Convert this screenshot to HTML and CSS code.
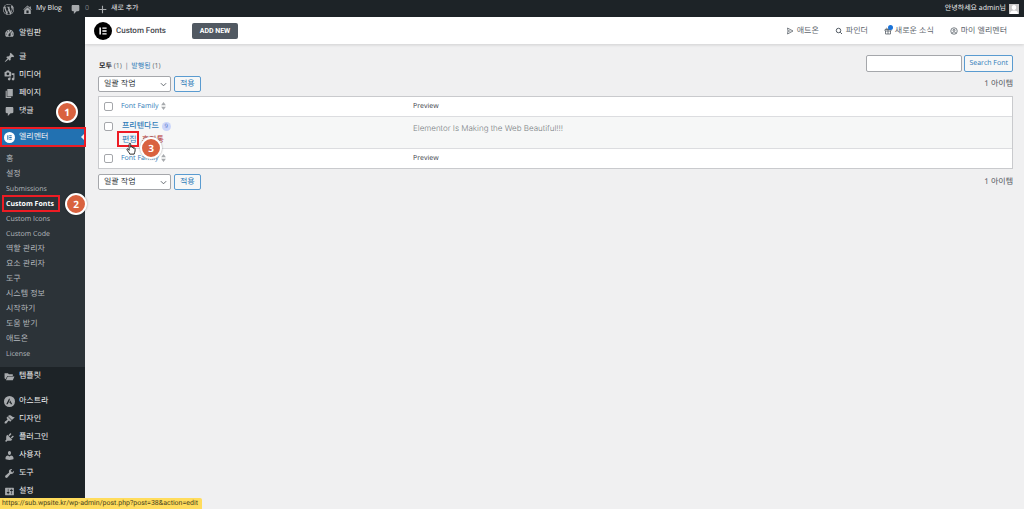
FILE: index.html
```html
<!DOCTYPE html>
<html lang="ko">
<head>
<meta charset="utf-8">
<title>Custom Fonts</title>
<link rel="stylesheet" href="styles.css">
</head>
<body>
<header class="adminbar">
  <a class="bar-link" href="#" aria-label="WordPress"><svg class="icon" viewBox="0 0 20 20"><path d="M20 10c0-5.51-4.49-10-10-10C4.48 0 0 4.49 0 10c0 5.52 4.48 10 10 10 5.51 0 10-4.48 10-10zM7.78 15.37L4.37 6.22c.55-.02 1.17-.08 1.17-.08.5-.06.44-1.13-.06-1.11 0 0-1.45.11-2.37.11-.18 0-.37 0-.58-.01C4.12 2.69 6.87 1.11 10 1.11c2.33 0 4.45.87 6.05 2.34-.68-.11-1.65.39-1.65 1.58 0 .74.45 1.36.9 2.1.35.61.55 1.36.55 2.46 0 1.49-1.4 5-1.4 5l-3.03-8.37c.54-.02.82-.17.82-.17.5-.05.44-1.25-.06-1.22 0 0-1.44.12-2.38.12-.87 0-2.33-.12-2.33-.12-.5-.03-.56 1.2-.06 1.22l.92.08 1.26 3.41zM17.41 10c.24-.64.74-1.87.43-4.25.7 1.29 1.05 2.71 1.05 4.25 0 3.29-1.73 6.24-4.4 7.78.97-2.59 1.94-5.2 2.92-7.78zM6.1 18.09C3.12 16.65 1.11 13.53 1.11 10c0-1.3.23-2.48.72-3.59C3.25 10.3 4.67 14.2 6.1 18.09zm4.03-6.63l2.58 6.98c-.86.29-1.76.45-2.71.45-.79 0-1.57-.11-2.29-.33.81-2.38 1.62-4.74 2.42-7.1z"/></svg></a>
  <a class="bar-link" href="#"><svg class="icon" viewBox="0 0 20 20"><path d="M16 8.5l1.53 1.53-1.06 1.06L10 4.6l-6.47 6.49-1.06-1.06L10 2.5l4 4v-2h2v4zm-6-2.46l6 5.99V18H4v-5.97zM12 17v-5H8v5h4z"/></svg><span>My Blog</span></a>
  <a class="bar-link muted" href="#"><svg class="icon" viewBox="0 0 20 20"><path d="M5 2h10c1.1 0 2 .9 2 2v7c0 1.1-.9 2-2 2h-3l-5 5v-5H5c-1.1 0-2-.9-2-2V4c0-1.1.9-2 2-2z"/></svg><span>0</span></a>
  <a class="bar-link" href="#"><svg class="icon" viewBox="0 0 20 20"><path d="M17 9v2h-6v6H9v-6H3V9h6V3h2v6h6z"/></svg><span>새로 추가</span></a>
  <a class="bar-link account" href="#"><span>안녕하세요 admin님</span><svg class="avatar" viewBox="0 0 20 20"><path class="avatar-bg" d="M0 0h20v20H0z"/><path class="avatar-fg" d="M10 2c3 0 4.500 2.200 4.500 5S12.500 12 10 12 5.500 10 5.500 7 7 2 10 2zM2 20c0-5 3-7 8-7s8 2 8 7z"/></svg></a>
</header>
<div class="layout">
<nav class="sidebar" aria-label="관리자 메뉴">
  <ul class="menu">
    <li><a class="menu-link" href="#"><svg class="icon" viewBox="0 0 20 20"><path d="M3.760 16h12.480c1.100-1.370 1.760-3.110 1.760-5 0-4.420-3.580-8-8-8s-8 3.580-8 8c0 1.890.66 3.630 1.760 5zM10 4c.55 0 1 .45 1 1s-.45 1-1 1-1-.45-1-1 .45-1 1-1zM6 6c.55 0 1 .45 1 1s-.45 1-1 1-1-.45-1-1 .45-1 1-1zm8 0c.55 0 1 .45 1 1s-.45 1-1 1-1-.45-1-1 .45-1 1-1zm-5.370 5.550L12 7v6c0 1.100-.9 2-2 2s-2-.9-2-2c0-.57.24-1.080.63-1.450zM4 10c.55 0 1 .45 1 1s-.45 1-1 1-1-.45-1-1 .45-1 1-1zm12 0c.55 0 1 .45 1 1s-.45 1-1 1-1-.45-1-1 .45-1 1-1z"/></svg>알림판</a></li>
  </ul>
  <ul class="menu">
    <li><a class="menu-link" href="#"><svg class="icon" viewBox="0 0 20 20"><path d="M10.440 3.020l1.820-1.820 6.360 6.350-1.830 1.820c-1.050-.68-2.480-.57-3.410.36l-.75.75c-.92.93-1.040 2.350-.35 3.410l-1.830 1.820-2.410-2.410-2.800 2.790c-.42.42-3.380 2.710-3.800 2.290s1.860-3.390 2.280-3.810l2.790-2.790L4.100 9.360l1.830-1.820c1.050.69 2.480.57 3.400-.36l.75-.75c.93-.92 1.050-2.350.36-3.410z"/></svg>글</a></li>
    <li><a class="menu-link" href="#"><svg class="icon" viewBox="0 0 20 20"><path d="M13 11V4c0-.55-.45-1-1-1h-1.670L9 1H5L3.670 3H2c-.55 0-1 .45-1 1v7c0 .55.45 1 1 1h10c.55 0 1-.45 1-1zM7 4.500c1.380 0 2.500 1.120 2.500 2.500S8.380 9.500 7 9.500 4.500 8.380 4.500 7 5.620 4.500 7 4.500zM14 6h5v10.500c0 1.380-1.120 2.500-2.500 2.500S14 17.880 14 16.500s1.120-2.500 2.500-2.500c.17 0 .34.02.5.05V9h-3V6zm-4 8.050V13h2v3.500c0 1.380-1.120 2.500-2.500 2.500S7 17.880 7 16.500 8.120 14 9.500 14c.17 0 .34.02.5.05z"/></svg>미디어</a></li>
    <li><a class="menu-link" href="#"><svg class="icon" viewBox="0 0 20 20"><path d="M6 15V2h10v13H6zm-1 1h8v2H3V5h2v11z"/></svg>페이지</a></li>
    <li><a class="menu-link" href="#"><svg class="icon" viewBox="0 0 20 20"><path d="M5 2h10c1.100 0 2 .9 2 2v7c0 1.100-.9 2-2 2h-3l-5 5v-5H5c-1.100 0-2-.9-2-2V4c0-1.100.9-2 2-2z"/></svg>댓글</a><span class="step step-one">1</span></li>
  </ul>
  <ul class="menu menu-open">
    <li>
      <a class="menu-link active" href="#"><svg class="icon" viewBox="0 0 20 20"><circle cx="10" cy="10" r="10"/><path class="cut" d="M6 6h2v8H6zM9.500 6H14v1.700H9.500zM9.500 9.200H14v1.700H9.500zM9.500 12.300H14V14H9.500z"/></svg>엘리멘터</a>
      <ul class="submenu">
        <li><a href="#">홈</a></li>
        <li><a href="#">설정</a></li>
        <li><a class="latin" href="#">Submissions</a></li>
        <li class="current"><a class="latin" href="#">Custom Fonts</a><span class="step step-two">2</span></li>
        <li><a class="latin" href="#">Custom Icons</a></li>
        <li><a class="latin" href="#">Custom Code</a></li>
        <li><a href="#">역할 관리자</a></li>
        <li><a href="#">요소 관리자</a></li>
        <li><a href="#">도구</a></li>
        <li><a href="#">시스템 정보</a></li>
        <li><a href="#">시작하기</a></li>
        <li><a href="#">도움 받기</a></li>
        <li><a href="#">애드온</a></li>
        <li><a class="latin" href="#">License</a></li>
      </ul>
    </li>
    <li><a class="menu-link" href="#"><svg class="icon" viewBox="0 0 20 20"><path d="M1 4h6l2 2h7v3H6l-3 6-2-2zM6.700 10H19l-3 7H3.500z"/></svg>템플릿</a></li>
  </ul>
  <ul class="menu">
    <li><a class="menu-link" href="#"><svg class="icon" viewBox="0 0 20 20"><circle cx="10" cy="10" r="10"/><path class="dark" d="M9.500 4L4 15h2.800l3.900-8.300zM11.300 8.300l-2 4.100h1.900l1 2.600H15z"/></svg>아스트라</a></li>
    <li><a class="menu-link" href="#"><svg class="icon" viewBox="0 0 20 20"><path d="M14.480 11.060L7.410 3.990l1.500-1.500c.5-.56 2.300-.47 3.510.32 1.210.8 1.430 1.280 2.910 2.100 1.180.64 2.450 1.260 4.450.85zm-.71.71L6.700 4.700 4.930 6.470c-.39.39-.39 1.020 0 1.410l1.060 1.060c.39.39.39 1.030 0 1.420-.6.6-1.430 1.110-2.210 1.690-.35.26-.7.53-1.010.84C1.430 14.230.4 16.080 1.400 17.070c.99 1 2.840-.03 4.180-1.360.31-.31.58-.66.85-1.020.57-.78 1.080-1.610 1.690-2.210.39-.39 1.020-.39 1.410 0l1.060 1.060c.39.39 1.020.39 1.410 0z"/></svg>디자인</a></li>
    <li><a class="menu-link" href="#"><svg class="icon" viewBox="0 0 20 20"><path d="M13.110 4.360L9.870 7.600 8 5.730l3.240-3.240c.35-.34 1.050-.2 1.560.32.52.51.66 1.210.31 1.550zm-8 1.770l.91-1.120 9.010 9.010-1.190.84c-.71.71-2.630 1.160-3.820 1.160H6.140L4.900 17.260c-.59.59-1.540.59-2.120 0-.59-.58-.59-1.530 0-2.120l1.240-1.240v-3.880c0-1.130.4-3.190 1.090-3.890zm7.260 3.970l3.240-3.240c.34-.35 1.040-.21 1.550.31.52.51.66 1.210.31 1.550l-3.240 3.250z"/></svg>플러그인</a></li>
    <li><a class="menu-link" href="#"><svg class="icon" viewBox="0 0 20 20"><path d="M10 9.250c-2.270 0-2.730-3.440-2.730-3.440C7 4.020 7.820 2 9.970 2c2.160 0 2.980 2.020 2.710 3.810 0 0-.41 3.440-2.680 3.440zm0 2.570L12.720 10c2.390 0 4.520 2.330 4.520 4.530v2.490s-3.650 1.130-7.240 1.130c-3.650 0-7.240-1.130-7.240-1.130v-2.490c0-2.250 1.940-4.480 4.470-4.480z"/></svg>사용자</a></li>
    <li><a class="menu-link" href="#"><svg class="icon" viewBox="0 0 20 20"><path d="M16.680 9.770c-1.340 1.340-3.300 1.670-4.950.99l-5.410 6.520c-.99.99-2.590.99-3.580 0s-.99-2.590 0-3.570l6.520-5.420c-.68-1.650-.35-3.610.99-4.950 1.280-1.280 3.120-1.620 4.720-1.060l-2.890 2.890 2.820 2.820 2.860-2.870c.53 1.580.18 3.390-1.080 4.650z"/></svg>도구</a></li>
    <li><a class="menu-link" href="#"><svg class="icon" viewBox="0 0 20 20"><path d="M18 16V4c0-.55-.45-1-1-1H3c-.55 0-1 .45-1 1v12c0 .55.45 1 1 1h14c.55 0 1-.45 1-1zM8 11h1c.55 0 1 .45 1 1s-.45 1-1 1H8v1.500c0 .28-.22.5-.5.5s-.5-.22-.5-.5V13H6c-.55 0-1-.45-1-1s.45-1 1-1h1V5.500c0-.28.22-.5.5-.5s.5.22.5.5V11zm5-2h-1c-.55 0-1-.45-1-1s.45-1 1-1h1V5.500c0-.28.22-.5.5-.5s.5.22.5.5V7h1c.55 0 1 .45 1 1s-.45 1-1 1h-1v5.500c0 .28-.22.5-.5.5s-.5-.22-.5-.5V9z"/></svg>설정</a></li>
  </ul>
</nav>
<div class="page">
  <div class="topbar">
    <svg class="logo" viewBox="0 0 20 20"><circle cx="10" cy="10" r="10"/><path d="M6 6h1.700v8H6zM9.300 6H14v1.600H9.300zM9.300 9.200H14v1.600H9.300zM9.300 12.400H14V14H9.300z"/></svg>
    <h1 class="title">Custom Fonts</h1>
    <button class="add-new" type="button">ADD NEW</button>
    <div class="top-links">
      <a href="#"><svg class="line-icon" viewBox="0 0 16 16"><path d="M3 2l11 6-11 6 1-6zM4 8h5"/></svg>애드온</a>
      <a href="#"><svg class="line-icon bold" viewBox="0 0 16 16"><circle cx="7" cy="7" r="4.500"/><path d="M10.500 10.500L14 14"/></svg>파인더</a>
      <a class="news" href="#"><svg class="line-icon" viewBox="0 0 16 16"><path d="M2 5h12v3H2zM3 8v6h10V8M8 5v9M8 5C6 1 3 2 5 5M8 5c2-4 5-3 3 0"/></svg>새로운 소식</a>
      <a href="#"><svg class="line-icon" viewBox="0 0 16 16"><circle cx="8" cy="8" r="6.500"/><circle cx="8" cy="6.500" r="2"/><path d="M4 13c0-4 8-4 8 0"/></svg>마이 엘리멘터</a>
    </div>
  </div>
  <main class="content">
    <div class="row head-row">
      <div class="views"><a class="chosen" href="#">모두</a> (1) <span class="divider">|</span> <a href="#">발행됨</a> (1)</div>
      <form class="search"><input class="field" type="search" aria-label="Search Font"><button class="button latin" type="button">Search Font</button></form>
    </div>
    <div class="row tablenav">
      <div class="bulk"><div class="select-wrap"><select class="select" aria-label="일괄 작업 선택"><option>일괄 작업</option></select><svg class="chevron" viewBox="0 0 8 5"><path d="M1 1l3 3 3-3"/></svg></div><button class="button" type="button">적용</button></div>
      <span class="count">1 아이템</span>
    </div>
    <table class="fonts">
      <thead><tr><th class="check"><input class="box" type="checkbox" aria-label="모두 선택"></th><th class="family"><a href="#">Font Family<svg class="sort" viewBox="0 0 6 10"><path d="M3 0l3 4H0zM0 6h6L3 10z"/></svg></a></th><th>Preview</th></tr></thead>
      <tbody><tr>
        <td class="check"><input class="box" type="checkbox" aria-label="프리텐다드 선택"></td>
        <td class="family"><div class="name"><a href="#">프리텐다드</a><span class="badge">9</span></div>
          <div class="actions"><a class="edit" href="#">편집</a><a class="trash" href="#">휴지통</a><svg class="hand" viewBox="0 0 16 20"><path d="M5 11V3c0-2 2.500-2 2.500 0v5c0-1.500 2.500-1.500 2.500 0v1c0-1.500 2.300-1.500 2.300 0v1c0-1.300 2.200-1.300 2.200 0v4c0 2-1.500 3-1.500 5H6c0-2-4-5-4.500-7.500C1 10 3.500 10 5 13z"/></svg><span class="step step-three">3</span></div></td>
        <td class="preview">Elementor Is Making the Web Beautiful!!!</td>
      </tr></tbody>
      <tfoot><tr><th class="check"><input class="box" type="checkbox" aria-label="모두 선택"></th><th class="family"><a href="#">Font Family<svg class="sort" viewBox="0 0 6 10"><path d="M3 0l3 4H0zM0 6h6L3 10z"/></svg></a></th><th>Preview</th></tr></tfoot>
    </table>
    <div class="row tablenav">
      <div class="bulk"><div class="select-wrap"><select class="select" aria-label="일괄 작업 선택"><option>일괄 작업</option></select><svg class="chevron" viewBox="0 0 8 5"><path d="M1 1l3 3 3-3"/></svg></div><button class="button" type="button">적용</button></div>
      <span class="count">1 아이템</span>
    </div>
  </main>
</div>
</div>
<div class="status">https://sub.wpsite.kr/wp-admin/post.php?post=38&amp;action=edit</div>
</body>
</html>
```
FILE: styles.css
```css
* { box-sizing: border-box; }
body {
  margin: 0;
  min-height: 100vh;
  display: flex;
  flex-direction: column;
  background: #f0f0f1;
  color: #50575e;
  font: 8px/12px "Open Sans", "Noto Sans CJK KR", sans-serif;
  text-rendering: geometricPrecision;
}
a { color: #2f7bb8; text-decoration: none; }
ul { margin: 0; padding: 0; list-style: none; }
button, input, select { font: inherit; margin: 0; text-rendering: inherit; }
.latin, .button.latin { font-size: 7px; }

.adminbar {
  display: flex;
  align-items: center;
  gap: 8px;
  height: 17px;
  padding: 1px 5px 0 3px;
  background: #1d2327;
  font-size: 7px;
}
.bar-link { display: flex; align-items: center; gap: 3px; color: #f0f0f1; }
.bar-link.muted { color: #7d8287; gap: 4px; }
.account { margin-left: auto; }
.icon { width: 11px; height: 11px; flex: none; fill: #a7aaad; }
.avatar { width: 10px; height: 10px; }
.avatar-bg { fill: #c9c9c9; }
.avatar-fg { fill: #fff; }

.layout { display: flex; flex: 1; }
.sidebar { flex: none; width: 85px; padding-top: 7px; background: #1d2327; }
.menu { margin-bottom: 6px; }
.menu li { position: relative; }
.menu-link {
  display: flex;
  align-items: center;
  gap: 4px;
  height: 18px;
  padding-left: 4px;
  color: #f0f0f1;
}
.menu-open { margin: 7px 0; }
.active {
  width: 86px;
  height: 20px;
  padding-left: 2px;
  border: 2px solid #ed1c24;
  background: #2271b1;
}
.active::after {
  content: "";
  margin-left: auto;
  border: 3px solid transparent;
  border-right-color: #f0f0f1;
  border-left-width: 0;
}
.active .icon { fill: #fff; }
.cut { fill: #2271b1; }
.dark { fill: #1d2327; }
.submenu { padding: 4px 0 6px; background: #2c3338; }
.submenu li { height: 15px; padding-left: 6px; line-height: 15px; }
.submenu a { color: #b4b9be; }
.submenu .current a { color: #fff; font-weight: 700; }
.current::before {
  content: "";
  position: absolute;
  inset: -1px 25px -1px 2px;
  border: 2px solid #ed1c24;
}

.step {
  position: absolute;
  z-index: 2;
  width: 22px;
  height: 22px;
  border: 2px solid #fff;
  border-radius: 50%;
  background: #d9623f;
  box-shadow: 0 0 2px #0006;
  color: #fff;
  font: 700 10px/18px "Open Sans", sans-serif;
  text-align: center;
}
.step-one { left: 56px; top: -1px; }
.step-two { left: 65px; top: -3px; }
.step-three { left: 19px; top: 5px; }

.page { flex: 1; min-width: 0; }
.topbar {
  display: flex;
  align-items: center;
  height: 27px;
  padding: 0 17px 0 9px;
  background: #fff;
  box-shadow: 0 1px 3px #0002;
}
.logo { width: 18px; height: 18px; }
.logo path { fill: #fff; }
.title { margin: 0 26px 0 4px; font: 500 8px/12px Roboto, sans-serif; color: #3f444b; }
.add-new {
  width: 46px;
  height: 16px;
  padding: 0;
  border: 0;
  border-radius: 2px;
  background: #515962;
  color: #fff;
  font: 700 7px/16px Roboto, sans-serif;
}
.top-links { display: flex; gap: 16px; margin-left: auto; }
.top-links a { display: flex; align-items: center; gap: 3px; color: #60666d; }
.line-icon { width: 8px; height: 8px; fill: none; stroke: #515962; stroke-width: 1.500; }
.line-icon.bold { stroke-width: 2; }
.news { position: relative; }
.news::before {
  content: "";
  position: absolute;
  left: 4px;
  top: 0;
  width: 5px;
  height: 5px;
  border-radius: 50%;
  background: #1a73d9;
}

.content { padding: 11px 11px 0 13px; }
.row { display: flex; justify-content: space-between; align-items: center; }
.head-row { align-items: flex-end; margin-bottom: 4px; }
.views { padding-left: 1px; font-size: 7px; line-height: 11px; color: #646970; }
.views .chosen { color: #1d2327; font-weight: 700; }
.divider { margin: 0 1px; }
.search, .bulk { display: flex; gap: 2px; }
.field, .select, .box { appearance: none; border: 1px solid #a5a7ab; border-radius: 2px; background: #fff; }
.field { width: 96px; height: 17px; }
.button {
  height: 16px;
  padding: 0 5px;
  border: 1px solid #5a9bd0;
  border-radius: 2px;
  background: #f6f7f7;
  color: #2f7bb8;
  line-height: 14px;
}
.bulk { gap: 3px; }
.search .button { height: 17px; padding: 0 4px; }
.select-wrap { position: relative; }
.select { display: block; width: 73px; height: 16px; padding: 0 14px 0 5px; color: #2c3338; line-height: 14px; }
.chevron { position: absolute; right: 4px; top: 6px; width: 7px; height: 5px; fill: none; stroke: #50575e; stroke-width: 1; pointer-events: none; }

.fonts {
  width: 100%;
  margin: 4px 0 5px;
  border: 1px solid #c9cacd;
  border-spacing: 0;
  background: #fff;
  table-layout: fixed;
}
.fonts th, .fonts td { padding: 0; text-align: left; font-weight: 400; color: #3c434a; }
.fonts th { height: 19px; font-size: 7px; }
.fonts td { height: 33px; vertical-align: top; background: #f6f7f7; border: solid #dcdde0; border-width: 1px 0; }
.fonts .check { width: 22px; padding-left: 5px; }
.fonts .family { width: 292px; }
.box { display: block; width: 9px; height: 9px; }
td .box { margin-top: 5px; }
.sort { width: 5px; height: 8px; margin-left: 3px; vertical-align: middle; fill: #a7aaad; }
.name { display: flex; align-items: center; gap: 3px; padding: 3px 0 0 1px; font-weight: 500; }
.badge { width: 9px; height: 9px; border-radius: 50%; background: #ccd6fa; color: #5573c8; font-size: 6px; line-height: 9px; text-align: center; }
.actions { position: relative; display: flex; gap: 5px; padding-left: 1px; line-height: 15px; }
.edit { position: relative; }
.edit::after { content: ""; position: absolute; inset: -1px -2px 0 -5px; border: 2px solid #ed1c24; }
.trash { color: #b32d2e; }
.hand { position: absolute; z-index: 1; left: 5px; top: 10px; width: 10px; height: 13px; fill: #fff; stroke: #222; stroke-width: 1.500; }
.fonts .preview { padding-top: 5px; color: #7a7f84; font: 300 8px/12px Inter, sans-serif; }

.status {
  position: fixed;
  left: 0;
  bottom: 0;
  padding: 0 4px 0 2px;
  border-radius: 0 2px 0 0;
  background: #ffdc5c;
  color: #4a4320;
  font: 7px/11px Roboto, sans-serif;
}
```
